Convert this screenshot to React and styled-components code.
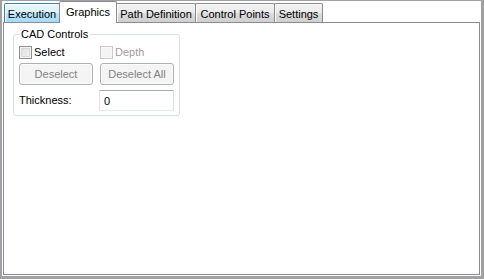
import React, { useState } from 'react';
import styled, { createGlobalStyle } from 'styled-components';

const GlobalStyle = createGlobalStyle`
    html, body {
        margin: 0;
        padding: 0;
        background: #ffffff;
    }
    body {
        font-family: "Liberation Sans", Arial, sans-serif;
        font-size: 11px;
        color: #000;
    }
`

const tabs = [
    { id: 'execution', label: 'Execution', width: 56 },
    { id: 'graphics', label: 'Graphics', width: 58 },
    { id: 'path', label: 'Path Definition', width: 80 },
    { id: 'control', label: 'Control Points', width: 80 },
    { id: 'settings', label: 'Settings', width: 49 },
];

function App() {
    const [active, setActive] = useState('graphics');
    const [hot] = useState('execution');
    const [select, setSelect] = useState(false);
    const [thickness, setThickness] = useState('0');

    return (
        <>
            <GlobalStyle />
            <Frame>
                <TabStrip>
                    {tabs.map((t) => (
                        <Tab
                            key={t.id}
                            $width={t.width}
                            $active={active === t.id}
                            $hot={hot === t.id && active !== t.id}
                            onClick={() => setActive(t.id)}
                        >
                            {t.label}
                        </Tab>
                    ))}
                </TabStrip>
                <Panel>
                    <GroupBox>
                        <Legend>CAD Controls</Legend>
                        <Grid>
                            <CheckLabel>
                                <CheckBox
                                    type="checkbox"
                                    checked={select}
                                    onChange={(e) => setSelect(e.target.checked)}
                                />
                                Select
                            </CheckLabel>
                            <CheckLabel $disabled>
                                <CheckBox type="checkbox" disabled />
                                Depth
                            </CheckLabel>
                            <Button disabled>Deselect</Button>
                            <Button disabled>Deselect All</Button>
                            <FieldLabel>Thickness:</FieldLabel>
                            <TextBox
                                value={thickness}
                                onChange={(e) => setThickness(e.target.value)}
                            />
                        </Grid>
                    </GroupBox>
                </Panel>
            </Frame>
        </>
    )
}

const Frame = styled.div`
    box-sizing: border-box;
    width: 484px;
    height: 279px;
    background: #ffffff;
    border-style: solid;
    border-color: #a0a0a0;
    border-width: 1px 3px 3px 2px;
    padding: 0 1px 1px 1px;
    display: flex;
    flex-direction: column;
`

const TabStrip = styled.div`
    display: flex;
    align-items: flex-end;
    height: 21px;
    padding-left: 1px;
    position: relative;
    z-index: 1;
`

const Tab = styled.div`
    box-sizing: border-box;
    width: ${(p) => p.$width}px;
    text-align: center;
    white-space: nowrap;
    cursor: default;
    border: 1px solid ${(p) => (p.$hot ? '#3c7fb1' : '#898c95')};
    border-bottom: none;
    border-radius: 2px 2px 0 0;
    margin-right: -1px;
    height: ${(p) => (p.$active ? 22 : 19)}px;
    margin-bottom: ${(p) => (p.$active ? -1 : 0)}px;
    padding-top: 3px;
    line-height: ${(p) => (p.$active ? 15 : 14)}px;
    position: relative;
    z-index: ${(p) => (p.$active ? 2 : 1)};
    background: ${(p) =>
        p.$active
            ? '#ffffff'
            : p.$hot
                ? 'linear-gradient(#eaf6fd 0%, #d9f0fc 50%, #bee6fd 51%, #a7d9f5 100%)'
                : 'linear-gradient(#f2f2f2 0%, #ebebeb 50%, #dddddd 51%, #cfcfcf 100%)'};
    box-shadow: ${(p) => (p.$active ? 'none' : 'inset 1px 1px 0 #fcfcfc')};
`

const Panel = styled.div`
    flex: 1;
    border: 1px solid #898c95;
    background: #ffffff;
    padding: 5px 0 0 9px;
`

const GroupBox = styled.fieldset`
    box-sizing: border-box;
    width: 166px;
    margin: 0;
    padding: 4px 5px 5px 5px;
    border: 1px solid #d5dfe5;
    border-radius: 3px;
`

const Legend = styled.legend`
    padding: 0 2px;
    line-height: 13px;
`

const Grid = styled.div`
    display: grid;
    grid-template-columns: 74px 74px;
    grid-template-rows: 15px 22px 22px;
    column-gap: 7px;
    row-gap: 3px;
    & > :nth-child(n + 5) {
        margin-top: 2px;
    }
`

const CheckLabel = styled.label`
    display: flex;
    align-items: center;
    gap: 2px;
    line-height: 15px;
    color: ${(p) => (p.$disabled ? '#a0a0a0' : '#000')};
`

const CheckBox = styled.input`
    appearance: none;
    box-sizing: border-box;
    width: 13px;
    height: 13px;
    margin: 0;
    border: 1px solid #8e8f8f;
    background: linear-gradient(135deg, #dcdcdc 0%, #f5f5f5 100%);
    box-shadow: inset 0 0 0 1px #f4f4f4, inset 0 0 0 2px #d8d8d8;

    &:checked {
        background: #fff;
    }
    &:checked::after {
        content: '✓';
        display: block;
        font-size: 10px;
        line-height: 11px;
        text-align: center;
        color: #1c4a8c;
    }
    &:disabled {
        border-color: #c9c9c9;
        background: #f4f4f4;
        box-shadow: inset 0 0 0 1px #f7f7f7;
    }
`

const Button = styled.button`
    box-sizing: border-box;
    height: 22px;
    margin: 0;
    padding: 0;
    font-family: inherit;
    font-size: 11px;
    color: #838383;
    background: #f4f4f4;
    border: 1px solid #adb2b5;
    border-radius: 3px;
    box-shadow: inset 0 0 0 1px #fbfbfb;
`

const FieldLabel = styled.span`
    display: flex;
    align-items: center;
`

const TextBox = styled.input`
    box-sizing: border-box;
    width: 75px;
    height: 21px;
    margin: 0 0 0 -1px;
    padding: 0 4px;
    font-family: inherit;
    font-size: 11px;
    color: #000;
    border: 1px solid #abadb3;
    border-top-color: #abadb3;
    border-right-color: #dbdfe6;
    border-bottom-color: #e3e9ef;
    border-left-color: #e2e3ea;
    outline: none;
`

export default App
